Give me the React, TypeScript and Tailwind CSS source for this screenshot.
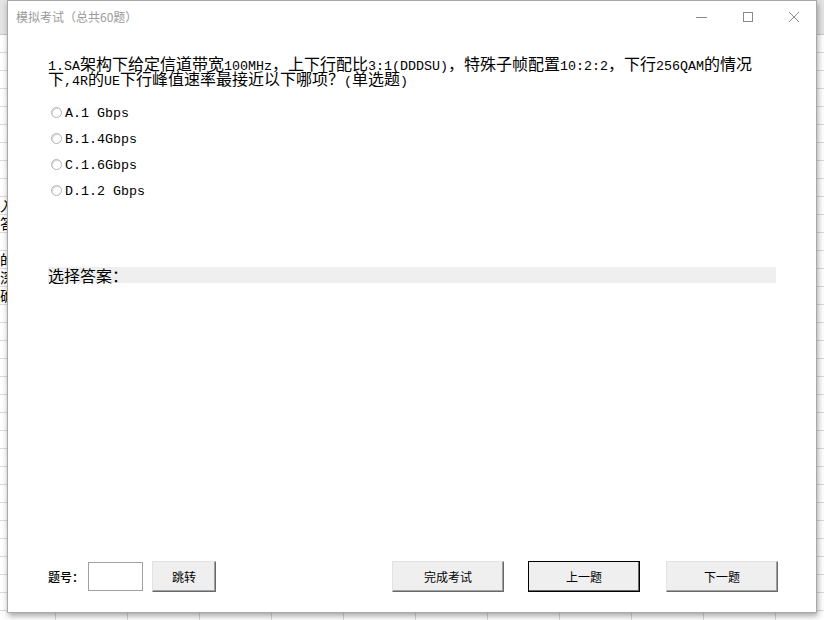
import React from 'react';

const cjk = "font-['Noto_Sans_CJK_SC',sans-serif]";
const mono = "font-['Liberation_Mono','Noto_Sans_CJK_SC',monospace] text-[13.33px]";

const M = ({ children }: { children: React.ReactNode }) => <span className={mono}>{children}</span>;

const sideText: Record<number, string> = { 9: '入', 10: '答', 12: '的', 13: '深', 14: '确' };

const Sheet = () => (
  <div className="flex flex-col">
    <div className="h-[35px] bg-[#e4e4e4] border-b border-[#c6c6c6]" />
    {Array.from({ length: 33 }).map((_, r) => (
      <div key={r} className="h-[18px] flex border-b border-[#dadada]">
        <div className={`w-[56px] shrink-0 border-r border-[#dadada] text-[14px] leading-[17px] text-black ${cjk}`}>
          {sideText[r] ?? ''}
        </div>
        {Array.from({ length: 11 }).map((_, c) => (
          <div key={c} className="w-[72px] shrink-0 border-r border-[#dadada]" />
        ))}
      </div>
    ))}
  </div>
);

const Btn = ({ label, w, focus }: { label: string; w: string; focus?: boolean }) => (
  <button
    className={`${w} h-[31px] bg-[#efefef] text-[12px] text-black ${cjk} ${
      focus
        ? 'border border-black shadow-[inset_-1px_-1px_0_#696969]'
        : 'border border-[#e3e3e3] border-r-[#696969] border-b-[#696969] shadow-[inset_-1px_-1px_0_#a0a0a0]'
    }`}
  >
    {label}
  </button>
);

const Radio = ({ children }: { children: React.ReactNode }) => (
  <div className="h-[26px] flex items-center">
    <span className="ml-[3px] w-[11px] h-[11px] rounded-full border border-[#b4b4b4] bg-white mb-[4px] shadow-[inset_1px_1px_0_#dcdcdc]" />
    <span className={`ml-[3px] text-black ${mono}`}>{children}</span>
  </div>
);

export default function App() {
  return (
    <div className="relative w-[824px] h-[620px] overflow-hidden bg-white">
      <Sheet />
      <div className="absolute left-[7px] top-0 w-[810px] h-[613px] bg-white border border-[#a8a8a8] shadow-[1px_3px_6px_rgba(0,0,0,0.35)] flex flex-col">
        <div className="h-[31px] shrink-0 flex items-center">
          <span className={`ml-[8px] text-[12px] text-[#9a9a9a] ${cjk}`}>模拟考试（总共60题）</span>
          <div className="ml-auto flex items-center">
            <svg width="12" height="12" viewBox="0 0 12 12" className="mr-[34px]">
              <line x1="0" y1="6.5" x2="11" y2="6.5" stroke="#8a8a8a" strokeWidth="1" />
            </svg>
            <svg width="12" height="12" viewBox="0 0 12 12" className="mr-[34px]">
              <rect x="1.5" y="1.5" width="9" height="9" fill="none" stroke="#8a8a8a" strokeWidth="1" />
            </svg>
            <svg width="12" height="12" viewBox="0 0 12 12" className="mr-[16px]">
              <path d="M1 1L11 11M11 1L1 11" stroke="#8a8a8a" strokeWidth="1" />
            </svg>
          </div>
        </div>

        <div className="pl-[40px] flex flex-col">
          <div className={`mt-[24px] text-[16px] leading-[15px] text-black whitespace-nowrap ${cjk}`}>
            <div className="h-[15px] flex items-baseline">
              <M>1.SA</M>架构下给定信道带宽<M>100MHz</M>，上下行配比<M>3:1(DDDSU)</M>，特殊子帧配置<M>10:2:2</M>，下行<M>256QAM</M>的情况
            </div>
            <div className="h-[15px] flex items-baseline">
              下<M>,4R</M>的<M>UE</M>下行峰值速率最接近以下哪项？<M>(</M>单选题<M>)</M>
            </div>
          </div>

          <div className="mt-[15px] flex flex-col">
            <Radio>A.1 Gbps</Radio>
            <Radio>B.1.4Gbps</Radio>
            <Radio>C.1.6Gbps</Radio>
            <Radio>D.1.2 Gbps</Radio>
          </div>

          <div className={`mt-[62px] w-[728px] h-[16px] bg-[#efefef] text-[16px] leading-[16px] text-black ${cjk}`}>
            选择答案：
          </div>
        </div>

        <div className="mt-auto mb-[20px] pl-[40px] flex items-center">
          <span className={`w-[40px] text-[12px] font-medium text-black ${cjk}`}>题号：</span>
          <div className="w-[55px] h-[29px] border border-[#a0a0a0] bg-white" />
          <div className="ml-[9px]">
            <Btn label="跳转" w="w-[64px]" />
          </div>
          <div className="ml-[176px]">
            <Btn label="完成考试" w="w-[112px]" />
          </div>
          <div className="ml-[24px]">
            <Btn label="上一题" w="w-[112px]" focus />
          </div>
          <div className="ml-[26px]">
            <Btn label="下一题" w="w-[112px]" />
          </div>
        </div>
      </div>
    </div>
  );
}
